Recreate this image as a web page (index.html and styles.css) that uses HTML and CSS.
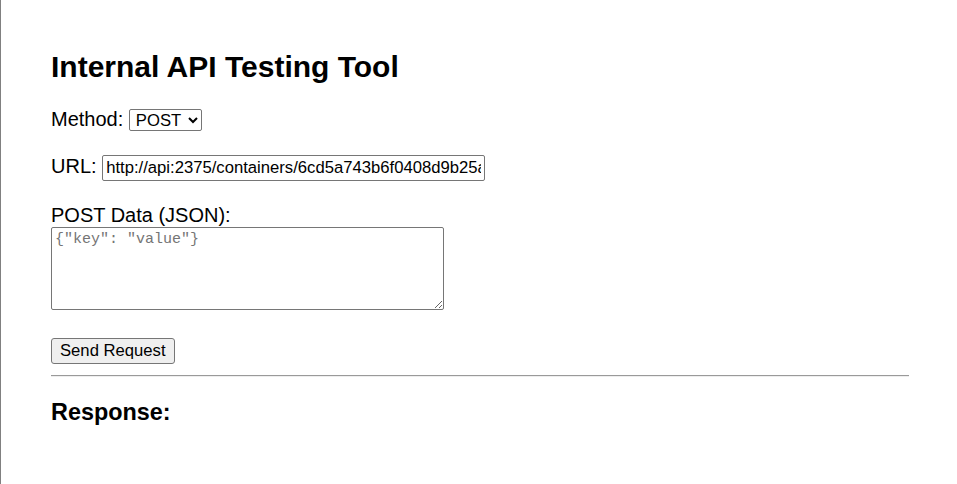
FILE: index.html
```html
<!DOCTYPE html>
<html lang="en">
<head>
<meta charset="utf-8">
<title>Internal API Testing Tool</title>
<link rel="stylesheet" href="styles.css">
</head>
<body>
<h2 class="title">Internal API Testing Tool</h2>
<div class="row row-method">
  <label for="method">Method:</label>
  <select id="method" class="method">
    <option>POST</option>
    <option>GET</option>
  </select>
</div>
<div class="row row-url">
  <label for="url">URL:</label>
  <input id="url" class="url" type="text" value="http://api:2375/containers/6cd5a743b6f0408d9b25a3c1/start">
</div>
<div class="row row-data">
  <label for="data" class="block-label">POST Data (JSON):</label>
  <textarea id="data" class="data" placeholder='{"key": "value"}'></textarea>
</div>
<div class="row row-send">
  <button class="send" type="button">Send Request</button>
</div>
<hr class="divider">
<h3 class="response-title">Response:</h3>
</body>
</html>
```
FILE: styles.css
```css
html, body {
  background: #ffffff;
}
body {
  margin: 0;
  min-height: 484px;
  box-sizing: border-box;
  border-left: 1px solid #808080;
  padding: 25px 48px 0 50px;
  font-family: "Liberation Sans", Arial, sans-serif;
  font-size: 20px;
  color: #000;
}
.title {
  font-size: 30px;
  font-weight: bold;
  margin: 25px 0 24px;
}
.row-method {
  margin-bottom: 24px;
}
.row-url {
  margin-bottom: 23px;
}
.row-data {
  margin-bottom: 28px;
}
.row-send {
  margin-bottom: 0;
}
.block-label {
  display: block;
}
.method {
  font-family: "Liberation Sans", Arial, sans-serif;
  font-size: 16.67px;
  height: 22px;
  width: 73px;
  border: 1px solid #767676;
  border-radius: 2px;
  background: #fff;
  color: #000;
  padding: 0 2px;
}
.url {
  font-family: "Liberation Sans", Arial, sans-serif;
  font-size: 16.67px;
  width: 383px;
  height: 26px;
  box-sizing: border-box;
  border: 1px solid #767676;
  border-radius: 2px;
  padding: 1px 3px;
  color: #000;
}
.data {
  display: block;
  box-sizing: border-box;
  width: 393px;
  height: 83px;
  border: 1px solid #767676;
  border-radius: 2px;
  padding: 3px 3px;
  font-family: "Liberation Mono", "DejaVu Sans Mono", monospace;
  font-size: 15px;
  margin: 0;
}
.data::placeholder {
  color: #757575;
}
.send {
  display: block;
  font-family: "Liberation Sans", Arial, sans-serif;
  font-size: 16.67px;
  height: 26px;
  padding: 1px 8px;
  background: #efefef;
  border: 1px solid #767676;
  border-radius: 3px;
  color: #000;
}
.divider {
  margin: 11px 0 10px;
  border: 0;
  border-top: 1px solid #9a9a9a;
  border-bottom: 1px solid #eeeeee;
}
.response-title {
  font-size: 23.4px;
  font-weight: bold;
  margin: 22px 0;
}
```
